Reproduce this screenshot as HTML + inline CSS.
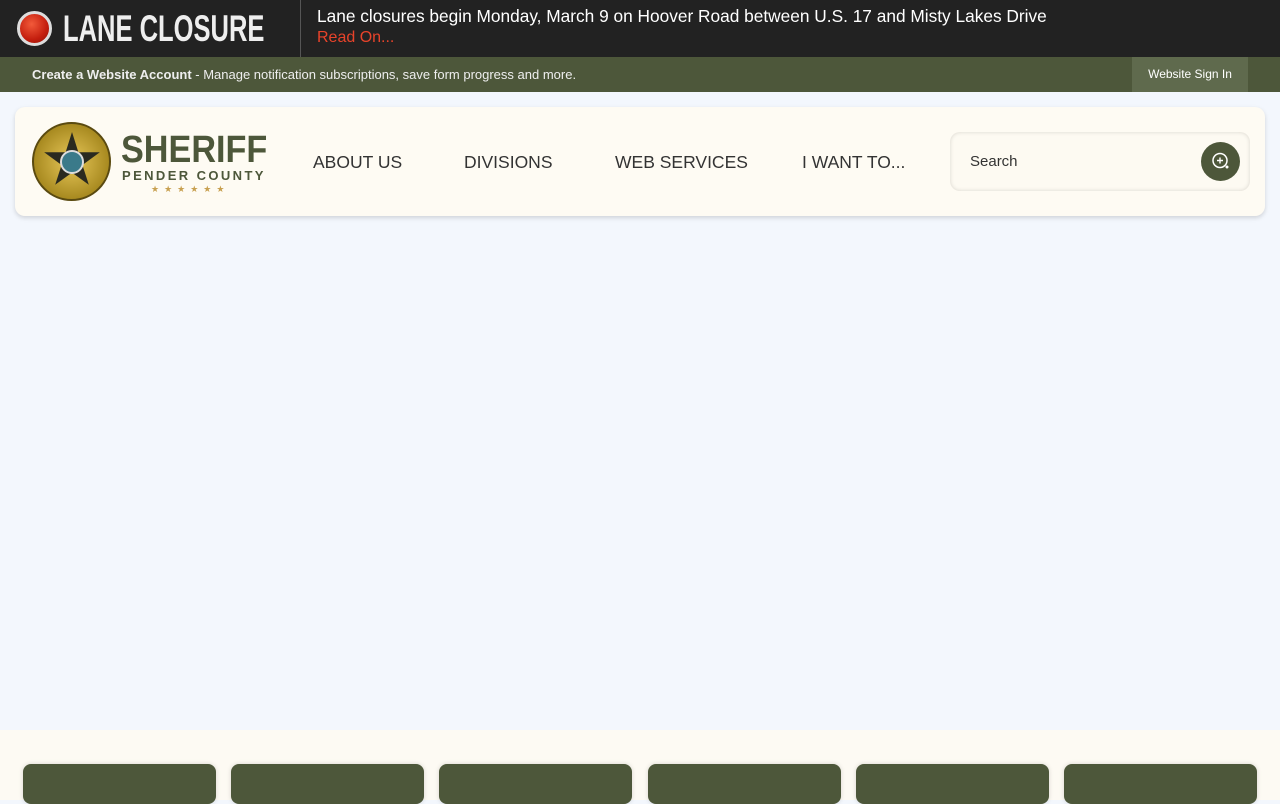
<!DOCTYPE html>
<html><head><style>
*{margin:0;padding:0;box-sizing:border-box}
body{width:1280px;height:800px;overflow:hidden;background:#f3f7fd;font-family:"Liberation Sans",sans-serif;position:relative}
.top{position:absolute;left:0;top:0;width:1280px;height:57px;background:#222}
.dot{position:absolute;left:17px;top:11px;width:35px;height:35px;border-radius:50%;background:radial-gradient(circle at 40% 35%,#f25a3a,#c41e0e 60%,#8a1208);border:3px solid #ddd}
.lc{position:absolute;left:63px;top:8px;color:#eee;font-size:37px;font-weight:bold;transform:scaleX(.69);transform-origin:left;white-space:nowrap}
.sep{position:absolute;left:300px;top:0;width:1px;height:57px;background:#555}
.msg{position:absolute;left:317px;top:6px;color:#fff;font-size:17.3px;white-space:nowrap}
.ro{position:absolute;left:317px;top:29px;color:#e8432a;font-size:16px}
.acc{position:absolute;left:0;top:57px;width:1280px;height:35px;background:#4d573a;color:#eee;font-size:13px}
.acc span{position:absolute;left:32px;top:10px;white-space:nowrap}
.sign{position:absolute;left:1132px;top:0;width:116px;height:35px;background:#5f6a4d;color:#fff;font-size:12px;text-align:center;line-height:35px}
.hdr{position:absolute;left:15px;top:107px;width:1250px;height:109px;background:#fefbf3;border-radius:10px;box-shadow:0 2px 5px rgba(0,0,0,.15)}
.badge{position:absolute;left:17px;top:15px;width:79px;height:79px;border-radius:50%;background:radial-gradient(circle,#e8c85a,#a88a20 70%,#6a5510);border:2px solid #5a4a10}
.star{position:absolute;left:9px;top:8px;width:58px;height:58px;background:#2a2a20;clip-path:polygon(50% 0,61% 35%,98% 35%,68% 57%,79% 91%,50% 70%,21% 91%,32% 57%,2% 35%,39% 35%)}
.seal{position:absolute;left:26px;top:26px;width:24px;height:24px;border-radius:50%;background:#3a7a8a;border:2px solid #ddd}
.sh{position:absolute;left:106px;top:22px;color:#4d573a;font-size:38px;font-weight:bold;transform:scaleX(.9);transform-origin:left;white-space:nowrap}
.pc{position:absolute;left:107px;top:61px;color:#4d573a;font-size:13px;font-weight:bold;letter-spacing:2.4px}
.st{position:absolute;left:136px;top:77px;color:#c8a050;font-size:9px;letter-spacing:5px}
.nav{position:absolute;top:45px;color:#333;font-size:17.5px;white-space:nowrap}
.srch{position:absolute;left:935px;top:25px;width:300px;height:59px;border-radius:10px;background:#fdfaf2;box-shadow:inset 0 0 4px rgba(0,0,0,.15)}
.srch span{position:absolute;left:20px;top:21px;font-size:15px;color:#333}
.btn{position:absolute;left:251px;top:10px;width:39px;height:39px;border-radius:50%;background:#4d573a}
.foot{position:absolute;left:0;top:730px;width:1280px;height:70px;background:#fdfaf3}
.card{position:absolute;top:764px;width:193px;height:40px;background:#4d573a;border-radius:8px;box-shadow:0 0 5px rgba(0,0,0,.15)}
</style></head><body>
<div class="top"><div class="dot"></div><div class="lc">LANE CLOSURE</div><div class="sep"></div>
<div class="msg">Lane closures begin Monday, March 9 on Hoover Road between U.S. 17 and Misty Lakes Drive</div>
<div class="ro">Read On...</div></div>
<div class="acc"><span><b>Create a Website Account</b> - Manage notification subscriptions, save form progress and more.</span><div class="sign">Website Sign In</div></div>
<div class="hdr">
<div class="badge"><div class="star"></div><div class="seal"></div></div>
<div class="sh">SHERIFF</div><div class="pc">PENDER COUNTY</div><div class="st">★★★★★★</div>
<div class="nav" style="left:298px">ABOUT US</div>
<div class="nav" style="left:449px">DIVISIONS</div>
<div class="nav" style="left:600px">WEB SERVICES</div>
<div class="nav" style="left:787px">I WANT TO...</div>
<div class="srch"><span>Search</span><div class="btn"><svg width="39" height="39" viewBox="0 0 39 39"><circle cx="19" cy="18.5" r="7" fill="none" stroke="#fff" stroke-width="1.5"/><path d="M19 15.5v6M16 18.5h6" stroke="#fff" stroke-width="1.4"/><circle cx="26" cy="25" r="1.5" fill="#fff"/></svg></div></div>
</div>
<div class="foot"></div>
<div class="card" style="left:23px"></div><div class="card" style="left:231px"></div><div class="card" style="left:439px"></div>
<div class="card" style="left:648px"></div><div class="card" style="left:856px"></div><div class="card" style="left:1064px"></div>
</body></html>
